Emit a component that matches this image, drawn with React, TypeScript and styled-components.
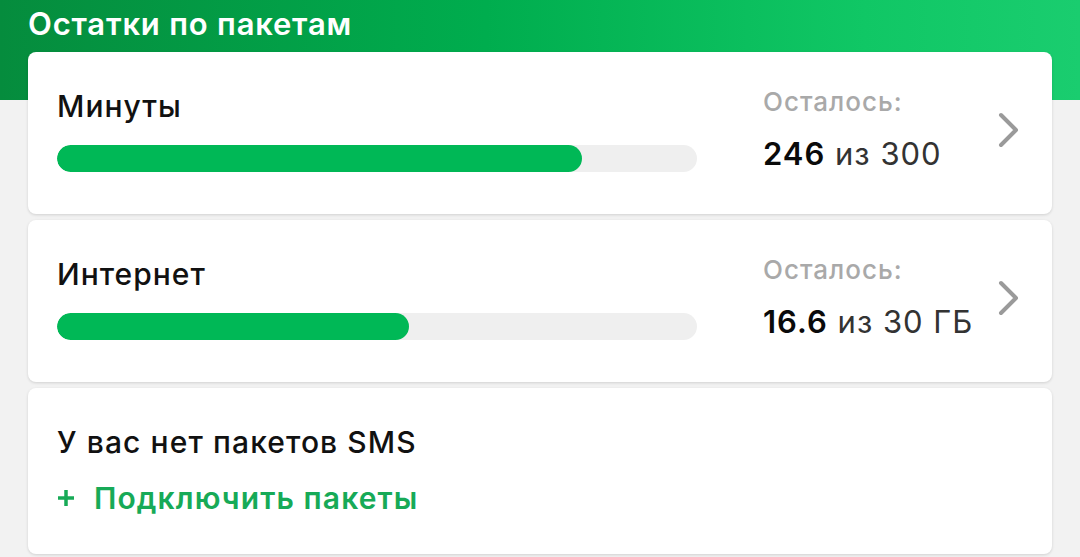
import React from "react";
import styled, { createGlobalStyle } from "styled-components";

const GlobalStyle = createGlobalStyle`
  html, body {
    margin: 0;
    padding: 0;
    background: #f2f2f2;
  }
  body {
    font-family: Inter, Roboto, "Noto Sans", sans-serif;
    -webkit-font-smoothing: antialiased;
  }
`;

const Page = styled.div`
  width: 1080px;
  height: 557px;
  overflow: hidden;
  box-sizing: border-box;
  padding: 0 28px;
  background:
    linear-gradient(90deg, #058c3d 0%, #00ad4e 45%, #10c765 80%, #1acd6f 100%) top left / 100% 100px no-repeat,
    #f2f2f2;
`;

const Title = styled.h1`
  margin: 0;
  height: 52px;
  padding-top: 4px;
  box-sizing: border-box;
  font-size: 31px;
  font-weight: 600;
  line-height: 40px;
  color: #fff;
  letter-spacing: 0.8px;
`;

const List = styled.div`
  display: flex;
  flex-direction: column;
  gap: 6px;
`;

const Card = styled.div<{ $height: number }>`
  height: ${(p) => p.$height}px;
  box-sizing: border-box;
  background: #fff;
  border-radius: 8px;
  box-shadow: 0 1px 3px rgba(0, 0, 0, 0.14);
`;

const PackageRow = styled(Card)`
  display: flex;
  align-items: flex-start;
  padding: 36px 32px 0 29px;
`;

const Left = styled.div`
  width: 640px;
  display: flex;
  flex-direction: column;
`;

const Name = styled.div`
  font-size: 30px;
  font-weight: 500;
  color: #111;
  line-height: 37px;
  letter-spacing: 1px;
`;

const Track = styled.div`
  margin-top: 20px;
  height: 27px;
  border-radius: 14px;
  background: #efefef;
  overflow: hidden;
`;

const Fill = styled.div`
  height: 100%;
  border-radius: 14px;
  background: #00b856;
`;

const Right = styled.div`
  margin-left: 66px;
  flex: 1;
  display: flex;
  flex-direction: column;
`;

const Label = styled.div`
  font-size: 26px;
  font-weight: 500;
  color: #a9a9a9;
  line-height: 30px;
  letter-spacing: 1px;
  margin-top: -1px;
`;

const Amount = styled.div`
  margin-top: 18px;
  font-size: 31px;
  line-height: 38px;
  color: #333;
  letter-spacing: 1px;
  b {
    color: #0a0a0a;
    font-weight: 600;
  }
`;

const Chevron = styled.svg`
  margin-top: 24px;
  width: 22px;
  height: 36px;
  flex: none;
`;

const EmptyCard = styled(Card)`
  padding: 36px 29px 0;
`;

const EmptyText = styled.div`
  font-size: 30px;
  font-weight: 500;
  color: #111;
  line-height: 37px;
  letter-spacing: 1.1px;
`;

const AddLink = styled.div`
  margin-top: 19px;
  display: flex;
  align-items: center;
  gap: 19px;
  font-size: 30px;
  font-weight: 600;
  color: #17aa57;
  line-height: 36px;
  letter-spacing: 1.1px;
`;

const Plus = styled.svg`
  width: 18px;
  height: 18px;
`;

type Pkg = { name: string; left: string; total: string; pct: number };

const packages: Pkg[] = [
  { name: "Минуты", left: "246", total: "из 300", pct: 82 },
  { name: "Интернет", left: "16.6", total: "из 30 ГБ", pct: 55 },
];

export default function App() {
  return (
    <>
      <GlobalStyle />
      <Page>
        <Title>Остатки по пакетам</Title>
        <List>
          {packages.map((p) => (
            <PackageRow key={p.name} $height={162}>
              <Left>
                <Name>{p.name}</Name>
                <Track>
                  <Fill style={{ width: `${p.pct}%` }} />
                </Track>
              </Left>
              <Right>
                <Label>Осталось:</Label>
                <Amount>
                  <b>{p.left}</b> {p.total}
                </Amount>
              </Right>
              <Chevron viewBox="0 0 22 36">
                <path d="M3 3 L18 18 L3 33" fill="none" stroke="#9a9a9a" strokeWidth="4" strokeLinecap="round" strokeLinejoin="round" />
              </Chevron>
            </PackageRow>
          ))}
          <EmptyCard $height={166}>
            <EmptyText>У вас нет пакетов SMS</EmptyText>
            <AddLink>
              <Plus viewBox="0 0 18 18">
                <path d="M9 1 V17 M1 9 H17" stroke="#17aa57" strokeWidth="3.5" />
              </Plus>
              Подключить пакеты
            </AddLink>
          </EmptyCard>
        </List>
      </Page>
    </>
  );
}
